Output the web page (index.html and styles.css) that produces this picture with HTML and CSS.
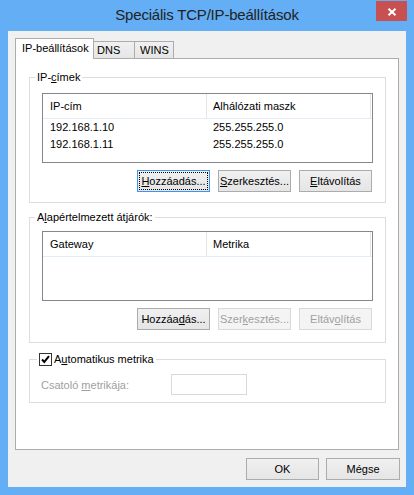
FILE: index.html
```html
<!DOCTYPE html>
<html lang="hu">
<head>
    <meta charset="UTF-8">
    <meta name="viewport" content="width=device-width, initial-scale=1.0">
    <title>Speciális TCP/IP-beállítások</title>
    <link rel="stylesheet" href="styles.css">
</head>
<body>
    <div class="window">
        <div class="titlebar">
            <div class="title">Speciális TCP/IP-beállítások</div>
            <div class="close">
                <svg width="10" height="8" viewBox="0 0 10 8"><path d="M1.5 0.8 L8.5 7.2 M8.5 0.8 L1.5 7.2" stroke="#fff" stroke-width="2" fill="none"/></svg>
            </div>
        </div>

        <div class="client">
            <div class="tabs">
                <div class="tab active">IP-beállítások</div>
                <div class="tab tab-dns">DNS</div>
                <div class="tab tab-wins">WINS</div>
            </div>

            <div class="page">
                <!-- IP-címek -->
                <fieldset class="group group-ip">
                    <legend>IP-<u>c</u>ímek</legend>
                    <div class="list">
                        <div class="list-head">
                            <span class="col col1">IP-cím</span>
                            <span class="col col2">Alhálózati maszk</span>
                        </div>
                        <div class="row">
                            <span class="col col1">192.168.1.10</span>
                            <span class="col col2">255.255.255.0</span>
                        </div>
                        <div class="row">
                            <span class="col col1">192.168.1.11</span>
                            <span class="col col2">255.255.255.0</span>
                        </div>
                    </div>
                    <div class="btn-row">
                        <button class="btn focused"><u>H</u>ozzáadás...</button>
                        <button class="btn"><u>S</u>zerkesztés...</button>
                        <button class="btn"><u>E</u>ltávolítás</button>
                    </div>
                </fieldset>

                <!-- átjárók -->
                <fieldset class="group group-gw">
                    <legend>A<u>l</u>apértelmezett átjárók:</legend>
                    <div class="list">
                        <div class="list-head">
                            <span class="col col1">Gateway</span>
                            <span class="col col2">Metrika</span>
                        </div>
                    </div>
                    <div class="btn-row">
                        <button class="btn">Hozzáa<u>d</u>ás...</button>
                        <button class="btn" disabled>Szer<u>k</u>esztés...</button>
                        <button class="btn" disabled>Eltáv<u>o</u>lítás</button>
                    </div>
                </fieldset>

                <!-- metrika -->
                <fieldset class="group group-metric">
                    <legend>
                        <span class="checkbox">
                            <svg width="13" height="13" viewBox="0 0 13 13"><rect x="0.5" y="0.5" width="12" height="12" fill="#fff" stroke="#333"/><path d="M3 6.5 L5.3 9 L10 3.2" stroke="#000" stroke-width="2" fill="none"/></svg>
                        </span>
                        <span>A<u>u</u>tomatikus metrika</span>
                    </legend>
                    <div class="metric-row">
                        <span class="metric-label">Csatoló <u>m</u>etrikája:</span>
                        <input class="field" type="text" disabled>
                    </div>
                </fieldset>
            </div>

            <div class="dialog-buttons">
                <button class="btn btn-ok">OK</button>
                <button class="btn btn-cancel">Mégse</button>
            </div>
        </div>
    </div>
</body>
</html>
```

FILE: styles.css
```css
* {
    box-sizing: border-box;
}
body {
    margin: 0;
    font-family: "Liberation Sans", Arial, sans-serif;
    font-size: 11px;
    color: #000;
    background: #64aef5;
}
u {
    text-decoration: underline;
    text-underline-offset: 1px;
}
.window {
    width: 414px;
    height: 495px;
    background: #64aef5;
    display: flex;
    flex-direction: column;
    overflow: hidden;
}
.titlebar {
    height: 31px;
    flex-shrink: 0;
    display: grid;
}
.title,
.close {
    grid-area: 1 / 1;
}
.title {
    text-align: center;
    font-size: 15px;
    line-height: 29px;
    letter-spacing: -0.2px;
    color: #222;
}
.close {
    justify-self: end;
    align-self: start;
    width: 31px;
    height: 20px;
    margin: 1px 7px 0 0;
    background: #c75050;
    display: flex;
    align-items: center;
    justify-content: center;
    padding-top: 1px;
}
.close svg {
    display: block;
}
.client {
    margin: 0 8px 8px;
    height: 456px;
    background: #f0f0f0;
    padding: 7px 7px 7px 7px;
    display: flex;
    flex-direction: column;
}
.tabs {
    display: flex;
    align-items: flex-end;
    height: 21px;
    margin-bottom: -1px;
}
.tab {
    height: 18px;
    border: 1px solid #acacac;
    border-bottom: none;
    background: linear-gradient(#f0f0f0, #e5e5e5);
    line-height: 16px;
    padding-left: 5px;
    margin-left: -1px;
    white-space: nowrap;
}
.tab.active {
    position: relative;
    z-index: 1;
    width: 79px;
    height: 21px;
    margin-left: 0;
    padding-left: 6px;
    background: #fff;
    line-height: 18px;
}
.tab-dns {
    width: 42px;
    padding-left: 3px;
}
.tab-wins {
    width: 40px;
}
.page {
    height: 392px;
    border: 1px solid #acacac;
    background: #fff;
    padding: 11px 12px 0 13px;
}
.group {
    margin: 0;
    min-width: 0;
    border: 1px solid #dcdcdc;
    padding: 9px 12px 10px 12px;
}
.group legend {
    padding: 0 2px;
    margin-left: -7px;
    line-height: 14px;
}
.group-gw {
    margin-top: 7px;
    padding-top: 7px;
    padding-bottom: 12px;
}
.group-metric {
    margin-top: 9px;
    padding-top: 8px;
    padding-bottom: 7px;
}
.group-metric legend {
    display: flex;
    align-items: center;
    gap: 2px;
    margin-left: -5px;
}
.checkbox svg {
    display: block;
}
.list {
    height: 70px;
    border: 1px solid #828790;
    background: #fff;
}
.list-head {
    display: flex;
    height: 25px;
    border-bottom: 1px solid #e3ebf5;
    line-height: 24px;
}
.list-head .col {
    border-right: 1px solid #e5e5e5;
}
.row {
    display: flex;
    line-height: 17px;
}
.col {
    display: block;
    width: 164px;
    white-space: nowrap;
}
.col1 {
    padding-left: 7px;
}
.col2 {
    padding-left: 6px;
}
.btn-row {
    display: flex;
    justify-content: flex-end;
    gap: 8px;
    margin-top: 7px;
    margin-right: 1px;
}
.btn {
    width: 73px;
    height: 22px;
    padding: 0;
    border: 1px solid #acacac;
    border-radius: 0;
    background: linear-gradient(#f0f0f0, #e5e5e5);
    font-family: inherit;
    font-size: 11px;
    color: #000;
    white-space: nowrap;
}
.btn.focused {
    border-color: #3d94f6;
    outline: 1px dotted #000;
    outline-offset: -3px;
}
.btn:disabled {
    border-color: #d9d9d9;
    background: #f4f4f4;
    color: #a0a0a0;
}
.metric-row {
    display: flex;
    align-items: center;
    margin-left: -1px;
}
.metric-label {
    width: 130px;
    color: #a0a0a0;
}
.field {
    width: 76px;
    height: 21px;
    border: 1px solid #d9d9d9;
    background: #fff;
    margin: 0;
}
.dialog-buttons {
    display: flex;
    justify-content: flex-end;
    gap: 7px;
    margin-top: 8px;
    margin-right: -1px;
}
.btn-cancel {
    width: 74px;
}
```
